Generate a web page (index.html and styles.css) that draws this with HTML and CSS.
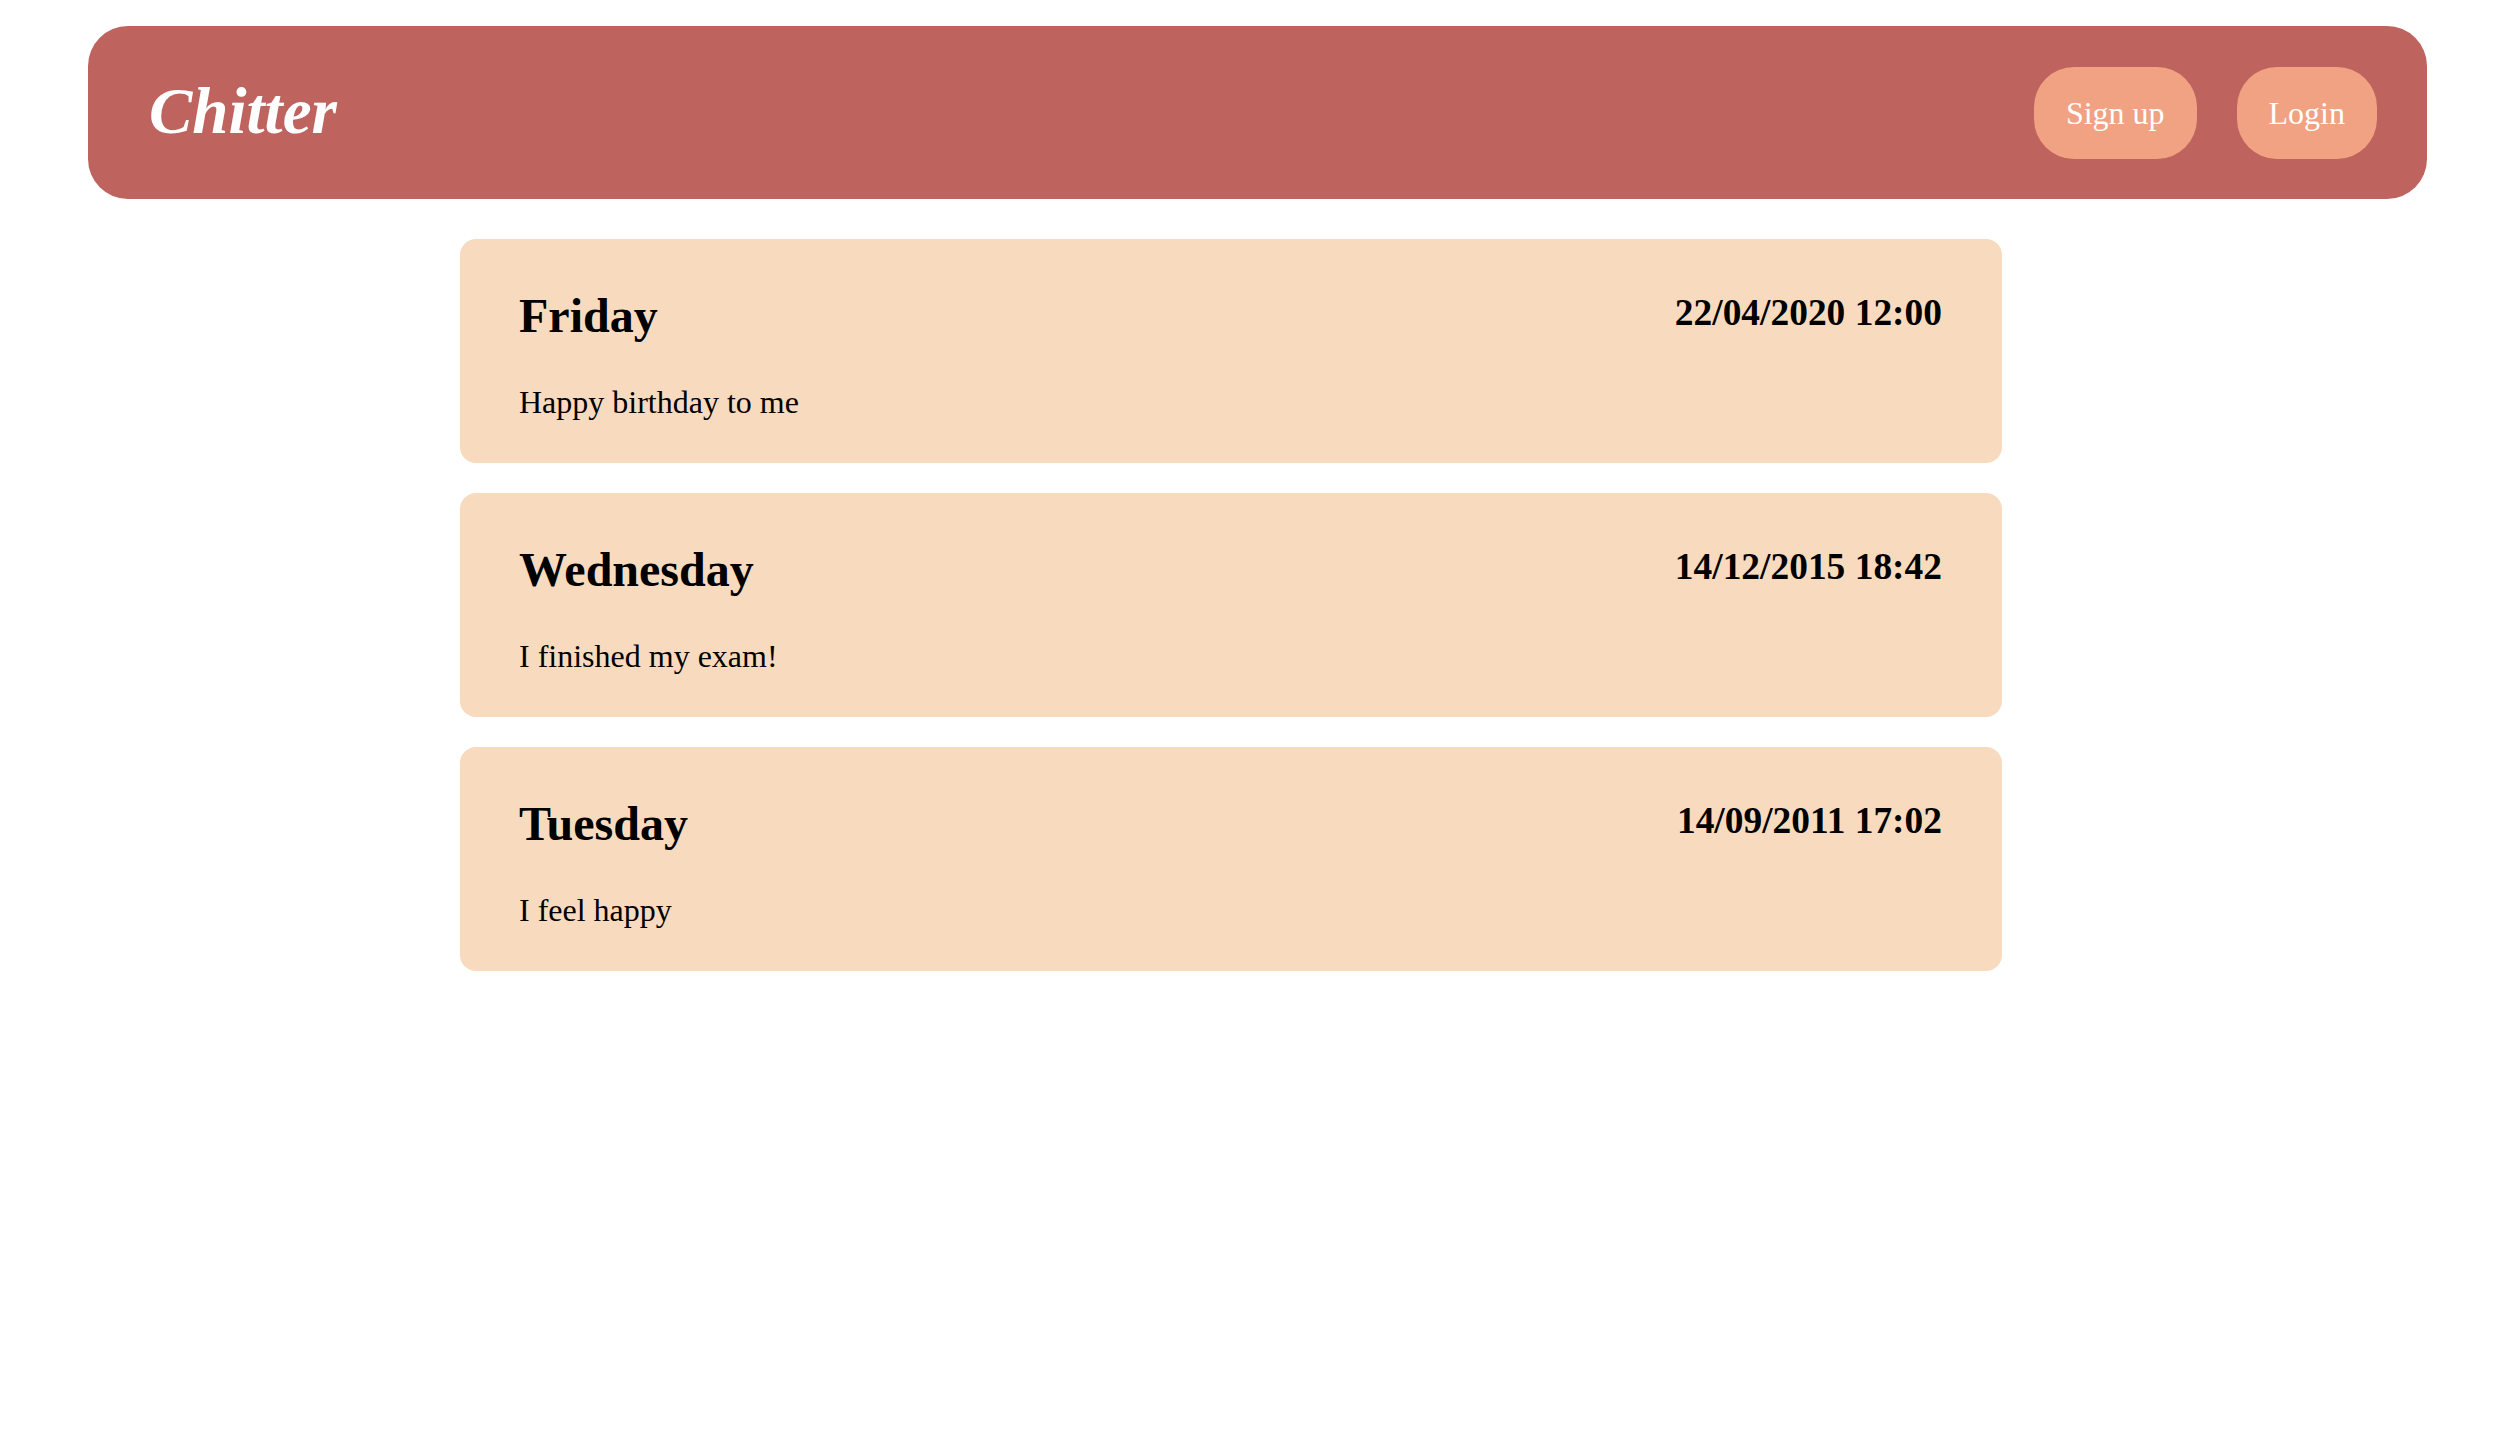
FILE: index.html
```html
<!DOCTYPE html>
<html lang="en">
<head>
<meta charset="utf-8">
<title>Chitter</title>
<link rel="stylesheet" href="styles.css">
</head>
<body>
<header class="topbar">
  <div class="brand">Chitter</div>
  <nav class="actions">
    <a class="btn" href="#">Sign up</a>
    <a class="btn" href="#">Login</a>
  </nav>
</header>
<main class="feed">
  <article class="peep">
    <div class="peep-head">
      <h2 class="peep-title">Friday</h2>
      <h3 class="peep-date">22/04/2020 12:00</h3>
    </div>
    <p class="peep-body">Happy birthday to me</p>
  </article>
  <article class="peep">
    <div class="peep-head">
      <h2 class="peep-title">Wednesday</h2>
      <h3 class="peep-date">14/12/2015 18:42</h3>
    </div>
    <p class="peep-body">I finished my exam!</p>
  </article>
  <article class="peep">
    <div class="peep-head">
      <h2 class="peep-title">Tuesday</h2>
      <h3 class="peep-date">14/09/2011 17:02</h3>
    </div>
    <p class="peep-body">I feel happy</p>
  </article>
</main>
</body>
</html>
```
FILE: styles.css
```css
html, body {
  margin: 0;
  padding: 0;
  background: #ffffff;
}

body {
  font-family: "Liberation Serif", "Times New Roman", serif;
  font-size: 32px;
  color: #000;
}

.topbar {
  margin: 26px 93px 0 88px;
  height: 173px;
  box-sizing: border-box;
  padding: 0 50px 0 61px;
  background: #be635e;
  border-radius: 40px;
  display: flex;
  align-items: center;
  justify-content: space-between;
}

.brand {
  font-size: 65px;
  font-weight: bold;
  font-style: italic;
  color: #fff;
  line-height: 71px;
  margin-top: -3px;
}

.actions {
  display: flex;
  gap: 40px;
  align-items: center;
}

.btn {
  display: block;
  background: #f1a283;
  color: #fff;
  text-decoration: none;
  font-size: 32px;
  line-height: 36px;
  padding: 28px 32px;
  border-radius: 40px;
}

.feed {
  margin: 40px 0 0 460px;
  width: 1542px;
  display: flex;
  flex-direction: column;
  gap: 30px;
}

.peep {
  background: #f8dbbe;
  border-radius: 16px;
  padding: 50px 60px 44px 59px;
  box-sizing: border-box;
  height: 224px;
}

.peep-head {
  display: flex;
  justify-content: space-between;
  align-items: flex-start;
}

.peep-title {
  margin: 0;
  font-size: 48px;
  font-weight: bold;
  line-height: 53px;
}

.peep-date {
  margin: 0;
  padding-top: 3px;
  font-size: 37.44px;
  font-weight: bold;
  line-height: 42px;
}

.peep-body {
  margin: 42px 0 0;
  font-size: 32px;
  line-height: 36px;
}
```
